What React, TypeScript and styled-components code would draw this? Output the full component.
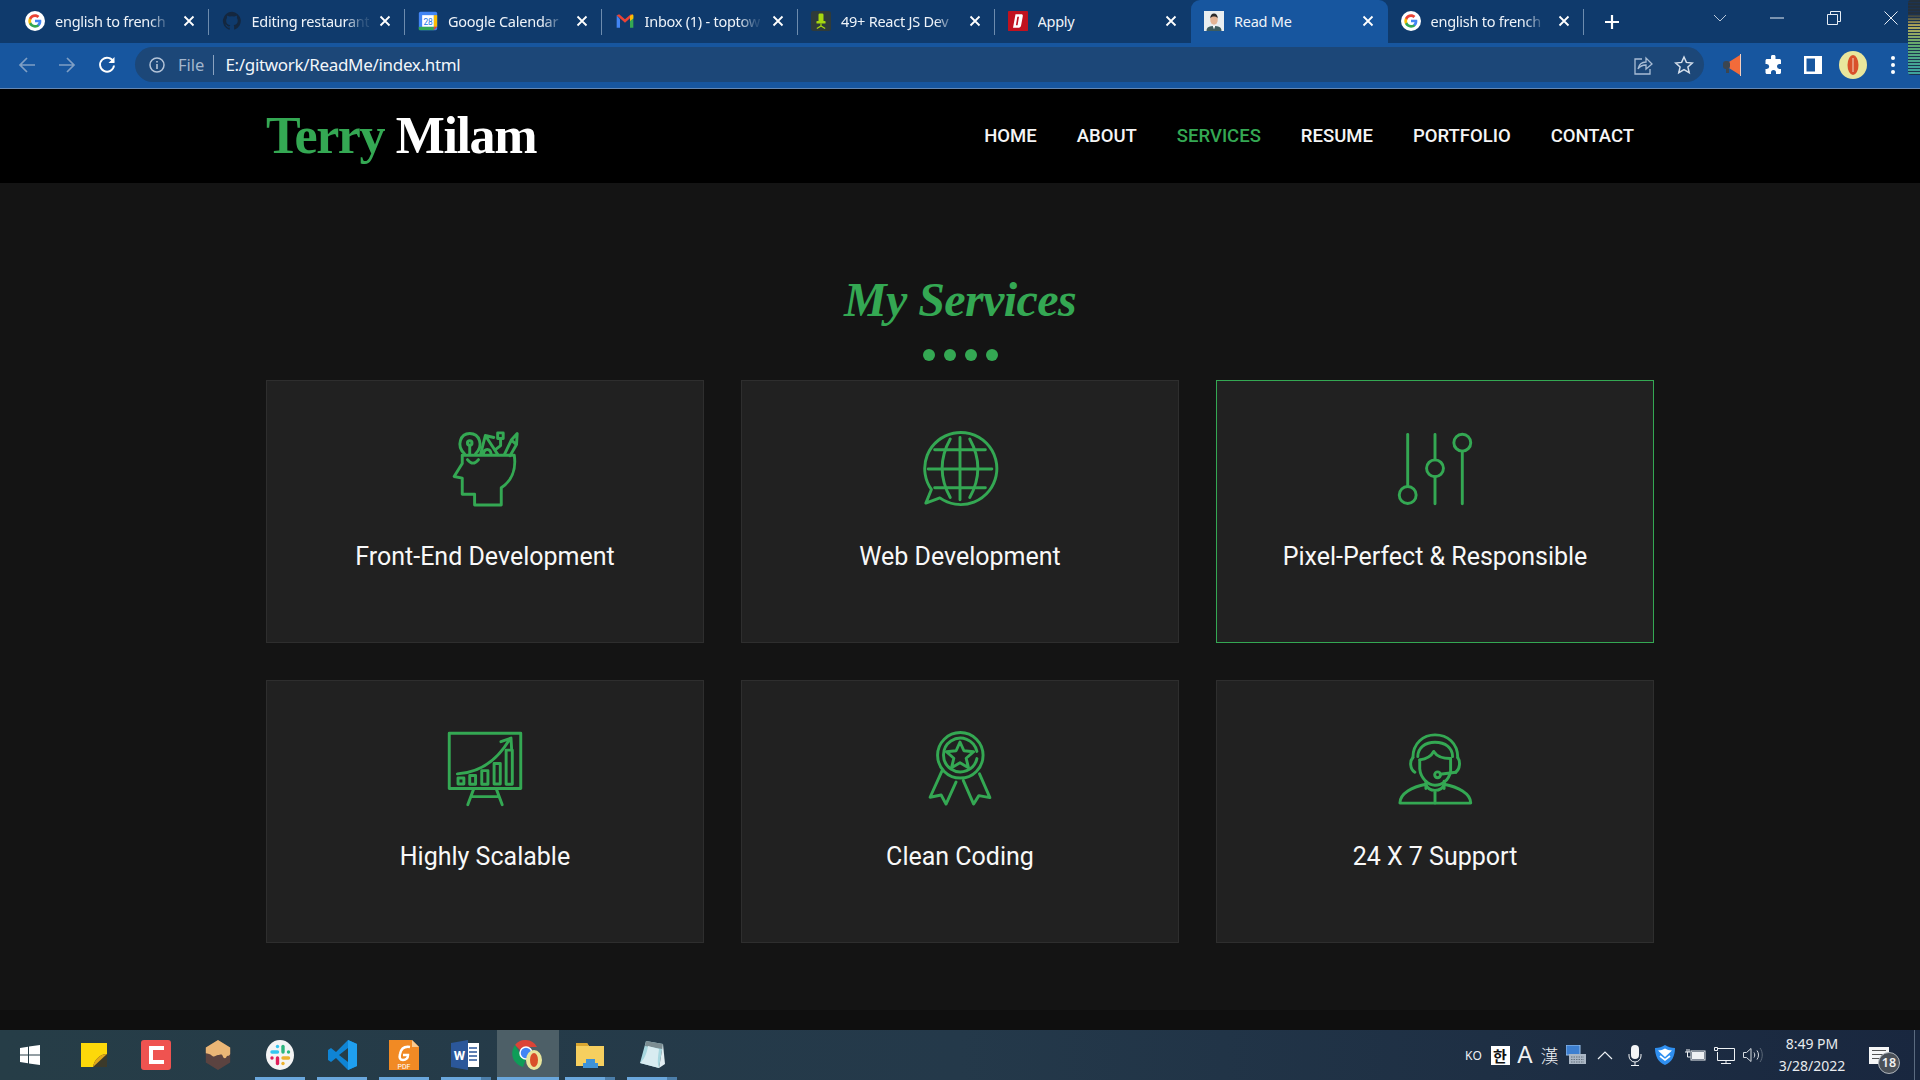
import React from "react";
import styled, { createGlobalStyle } from "styled-components";

const GREEN = "#34a853";

const Global = createGlobalStyle`
  html, body { margin: 0; padding: 0; background: #141414; }
  * { box-sizing: border-box; }
`;

const Screen = styled.div`
  position: relative;
  width: 1920px;
  height: 1080px;
  overflow: hidden;
  display: flex;
  flex-direction: column;
  background: #141414;
  font-family: "Noto Sans", sans-serif;
`;

/* ---------- browser chrome ---------- */
const TabStrip = styled.div`
  height: 43px;
  flex: none;
  display: flex;
  align-items: stretch;
  padding-left: 12px;
  background: #0f3a6c;
`;
const Tab = styled.div<{ $active?: boolean; $sep?: boolean }>`
  position: relative;
  width: 196.5px;
  flex: none;
  display: flex;
  align-items: center;
  padding: 0 13px 2px 13px;
  gap: 10px;
  color: #eef3f9;
  font-size: 14.5px;
  letter-spacing: -0.25px;
  background: ${(p) => (p.$active ? "#17569f" : "transparent")};
  border-radius: ${(p) => (p.$active ? "9px 9px 0 0" : "0")};
  &::after {
    content: "";
    display: ${(p) => (p.$sep ? "block" : "none")};
    position: absolute;
    right: 0;
    top: 9px;
    height: 26px;
    width: 1px;
    background: #6d8cae;
  }
`;
const Fav = styled.svg`
  width: 20px;
  height: 20px;
  flex: none;
`;
const TabTitle = styled.span<{ $fade?: boolean }>`
  flex: 1;
  min-width: 0;
  white-space: nowrap;
  overflow: hidden;
  ${(p) =>
    p.$fade
      ? "mask-image: linear-gradient(90deg, #000 80%, rgba(0,0,0,0.15) 95%);"
      : ""}
`;
const CloseX = styled.svg`
  width: 12px;
  height: 12px;
  flex: none;
  margin-right: 1px;
`;
const NewTab = styled.div`
  width: 56px;
  flex: none;
  display: flex;
  align-items: center;
  justify-content: center;
`;
const WinControls = styled.div`
  margin-left: auto;
  display: flex;
  align-items: flex-start;
  padding-right: 1px;
`;
const WinBtn = styled.div`
  width: 57px;
  height: 36px;
  display: flex;
  align-items: center;
  justify-content: center;
`;
const ToolBar = styled.div`
  height: 46px;
  flex: none;
  display: flex;
  align-items: center;
  padding: 0 8px 2px 7px;
  background: #17569f;
  border-bottom: 1px solid #6487b3;
`;
const ToolBtn = styled.div<{ $w?: number }>`
  width: ${(p) => p.$w ?? 40}px;
  height: 35px;
  flex: none;
  display: flex;
  align-items: center;
  justify-content: center;
`;
const Omnibox = styled.div`
  width: 1569px;
  height: 35px;
  margin: 0 9px 0 8px;
  flex: none;
  display: flex;
  align-items: center;
  padding: 0 0 0 13px;
  border-radius: 18px;
  background: #1c4778;
`;
const SchemeLabel = styled.span`
  margin-left: 12px;
  font-size: 16.5px;
  color: #a3b6cd;
`;
const UrlDivider = styled.span`
  width: 1px;
  height: 20px;
  margin: 0 11px 0 9px;
  background: #8ba3c0;
`;
const UrlText = styled.span`
  font-size: 17px;
  letter-spacing: -0.32px;
  color: #f2f6fa;
`;
const OmniActions = styled.div`
  margin-left: auto;
  display: flex;
`;
const Meter = styled.div`
  position: absolute;
  top: 0;
  right: 0;
  width: 12px;
  height: 75px;
  border-radius: 3px 0 0 3px;
  background: repeating-linear-gradient(
      180deg,
      transparent 0 2px,
      #1d3350 2px 3px
    ),
    linear-gradient(180deg, #24303c 0 18%, #b5a95a 35%, #5fa86f 60%, #3fa39b 90%);
`;

/* ---------- page ---------- */
const SiteHeader = styled.header`
  height: 94px;
  flex: none;
  background: #000;
`;
const HeaderInner = styled.div`
  width: 1388px;
  height: 100%;
  margin: 0 auto;
  display: flex;
  align-items: center;
  justify-content: space-between;
`;
const Logo = styled.div`
  font-family: "Liberation Serif", serif;
  font-weight: 700;
  font-size: 52px;
  letter-spacing: -1.4px;
  color: #fff;
  line-height: 1;
`;
const LogoAccent = styled.span`
  color: ${GREEN};
`;
const Nav = styled.nav`
  display: flex;
`;
const NavLink = styled.a<{ $active?: boolean }>`
  padding: 0 20px;
  font-family: Roboto, sans-serif;
  font-weight: 500;
  font-size: 18.5px;
  color: ${(p) => (p.$active ? GREEN : "#f5f5f5")};
`;
const Main = styled.main`
  flex: 1;
  padding-top: 87px;
  display: flex;
  flex-direction: column;
  align-items: center;
`;
const Title = styled.h2`
  margin: 0;
  height: 60px;
  line-height: 60px;
  font-family: "Liberation Serif", serif;
  font-style: italic;
  font-weight: 700;
  font-size: 48px;
  letter-spacing: -0.6px;
  color: ${GREEN};
`;
const Dots = styled.div`
  display: flex;
  gap: 9px;
  margin: 19px 0;
`;
const Dot = styled.span`
  width: 12px;
  height: 12px;
  border-radius: 50%;
  background: ${GREEN};
`;
const Grid = styled.div`
  display: grid;
  grid-template-columns: repeat(3, 438px);
  grid-auto-rows: 263px;
  column-gap: 37px;
  row-gap: 37px;
`;
const Card = styled.article<{ $hl?: boolean }>`
  display: flex;
  flex-direction: column;
  align-items: center;
  padding-top: 48px;
  background: #212121;
  border: 1px solid ${(p) => (p.$hl ? GREEN : "#2e2e2e")};
`;
const CardIcon = styled.svg`
  width: 78px;
  height: 78px;
  flex: none;
  fill: none;
  stroke: ${GREEN};
  stroke-width: 9;
  stroke-linecap: round;
  stroke-linejoin: round;
`;
const CardTitle = styled.h3`
  margin: 35px 0 0;
  line-height: 30px;
  font-family: Roboto, sans-serif;
  font-weight: 400;
  font-size: 25px;
  color: #f8f8f8;
`;
const PageFoot = styled.div`
  height: 20px;
  flex: none;
  background: #0f0f0f;
`;

/* ---------- taskbar ---------- */
const Taskbar = styled.footer`
  height: 50px;
  flex: none;
  display: flex;
  align-items: stretch;
  background: linear-gradient(90deg, #263d47 0%, #24394a 50%, #19273f 100%);
`;
const StartBtn = styled.div`
  width: 63px;
  flex: none;
  display: flex;
  align-items: center;
  justify-content: center;
  padding-right: 3px;
`;
const Slot = styled.div<{ $run?: boolean; $active?: boolean; $multi?: boolean }>`
  position: relative;
  width: 62px;
  flex: none;
  display: flex;
  align-items: center;
  justify-content: center;
  background: ${(p) => (p.$active ? "#4d5f67" : "transparent")};
  &::after {
    content: "";
    display: ${(p) => (p.$run ? "block" : "none")};
    position: absolute;
    bottom: 0;
    left: ${(p) => (p.$active ? "0" : "6px")};
    right: ${(p) => (p.$active ? "0" : "6px")};
    height: 3px;
    background: ${(p) =>
      p.$multi
        ? "linear-gradient(90deg, #6aa7dc 0 40px, #4c7ea9 40px)"
        : "#6aa7dc"};
  }
`;
const Tray = styled.div`
  margin-left: auto;
  display: flex;
  align-items: stretch;
  color: #eef1f4;
`;
const TraySlot = styled.div<{ $w: number }>`
  width: ${(p) => p.$w}px;
  flex: none;
  display: flex;
  align-items: center;
  justify-content: center;
`;
const Ko = styled.span`
  font-size: 12px;
  letter-spacing: 0.3px;
`;
const Hangul = styled.span`
  width: 19px;
  height: 19px;
  display: flex;
  align-items: center;
  justify-content: center;
  background: #fff;
  color: #111;
  font-family: "Noto Sans CJK KR", sans-serif;
  font-weight: 700;
  font-size: 15px;
`;
const BigA = styled.span`
  font-family: "Liberation Sans", sans-serif;
  font-size: 23px;
`;
const Han = styled.span`
  font-family: "Noto Sans CJK TC", sans-serif;
  font-size: 18px;
  font-weight: 300;
`;
const Clock = styled.div`
  display: flex;
  flex-direction: column;
  align-items: center;
  font-size: 14px;
  line-height: 22px;
  color: #e8ebee;
`;
const Notif = styled.div`
  position: relative;
  width: 20px;
  height: 17px;
  background: #f5f6f7;
`;
const NotifLine = styled.span`
  display: block;
  height: 1px;
  margin: 3px 3px 0;
  background: #555;
`;
const NotifBadge = styled.span`
  position: absolute;
  right: -11px;
  bottom: -10px;
  width: 22px;
  height: 22px;
  border-radius: 50%;
  display: flex;
  align-items: center;
  justify-content: center;
  background: #4a5058;
  border: 1px solid #aeb4ba;
  font-size: 12.5px;
  font-weight: 600;
  color: #f2f2f2;
`;
const TrayEdge = styled.span`
  width: 1px;
  margin: 0 5px 0 13px;
  flex: none;
  background: #5b6b80;
`;

/* ---------- favicons ---------- */
const GoogleG = () => (
  <Fav viewBox="0 0 24 24">
    <circle cx="12" cy="12" r="12" fill="#fff" />
    <path d="M19.6 12.2c0-.6-.1-1.1-.2-1.6H12v3h4.3c-.2 1-.7 1.8-1.6 2.4v2h2.6c1.5-1.4 2.3-3.4 2.3-5.8z" fill="#4285F4" />
    <path d="M12 20c2.2 0 4-.7 5.3-1.9l-2.6-2c-.7.5-1.6.8-2.7.8-2.1 0-3.9-1.4-4.5-3.3H4.8v2.1C6.1 18.2 8.8 20 12 20z" fill="#34A853" />
    <path d="M7.5 13.6c-.3-1-.3-2.1 0-3.1V8.4H4.8c-1.1 2.2-1.1 5 0 7.3l2.7-2.1z" fill="#FBBC05" />
    <path d="M12 7.2c1.2 0 2.2.4 3 1.2l2.3-2.3C15.9 4.8 14.1 4 12 4 8.8 4 6.1 5.8 4.8 8.4l2.7 2.1c.6-1.9 2.4-3.3 4.5-3.3z" fill="#EA4335" />
  </Fav>
);
const GithubFav = () => (
  <Fav viewBox="0 0 24 24">
    <path fill="#14273f" d="M12 1a11 11 0 0 0-3.5 21.4c.6.1.8-.2.8-.5v-2c-3 .7-3.7-1.3-3.7-1.3-.5-1.3-1.2-1.6-1.2-1.6-1-.7 0-.7 0-.7 1.1.1 1.7 1.1 1.7 1.1 1 1.7 2.6 1.2 3.2.9.1-.7.4-1.2.7-1.5-2.4-.3-5-1.2-5-5.4 0-1.2.4-2.2 1.1-2.9-.1-.3-.5-1.4.1-2.9 0 0 .9-.3 3 1.1a10.500 10.500 0 0 1 5.500 0c2.100-1.400 3-1.100 3-1.100.6 1.500.2 2.600.1 2.900.7.7 1.100 1.700 1.100 2.900 0 4.200-2.600 5.100-5 5.400.4.3.7 1 .7 2v3c0 .3.2.6.8.5A11 11 0 0 0 12 1z" />
  </Fav>
);
const CalendarFav = () => (
  <Fav viewBox="0 0 24 24">
    <rect x="1" y="1" width="22" height="22" rx="2" fill="#4285F4" />
    <rect x="5" y="5" width="14" height="14" fill="#fff" />
    <rect x="1" y="19" width="18" height="4" fill="#34A853" />
    <rect x="19" y="5" width="4" height="14" fill="#FBBC05" />
    <path d="M19 19h4l-4 4z" fill="#EA4335" />
    <text x="12" y="16.500" textAnchor="middle" fontSize="10" fontFamily="Roboto, sans-serif" fill="#1a73e8">28</text>
  </Fav>
);
const GmailFav = () => (
  <Fav viewBox="0 0 24 24">
    <path d="M2 5v15h4V10z" fill="#4285F4" />
    <path d="M22 5v15h-4V10z" fill="#34A853" />
    <path d="M2 5l3-1 7 6 7-6 3 1-10 9z" fill="#EA4335" />
    <path d="M18 6l3-2 1 1v4l-4 3z" fill="#FBBC05" />
  </Fav>
);
const ChairFav = () => (
  <Fav viewBox="0 0 24 24">
    <rect x="0" y="0" width="24" height="24" rx="3" fill="#2f3b3a" />
    <rect x="9" y="3" width="6" height="11" rx="1.500" fill="#a6d80f" />
    <rect x="6.500" y="12" width="11" height="3" rx="1" fill="#a6d80f" />
    <path d="M12 15v4M7 21l5-3 5 3" stroke="#a6d80f" strokeWidth="1.500" fill="none" />
  </Fav>
);
const DFav = () => (
  <Fav viewBox="0 0 24 24">
    <rect width="24" height="24" fill="#c1121f" rx="1" />
    <path d="M9 4h7c1.500 0 2 1 1.700 2.500l-2 11C15.400 19 14.500 20 13 20H6z M11.200 7L9.500 17h2l1.700-10z" fill="#fff" fillRule="evenodd" />
  </Fav>
);
const PersonFav = () => (
  <Fav viewBox="0 0 24 24">
    <rect width="24" height="24" fill="#e9eef0" />
    <path d="M3 24c0-5 4-6 9-6s9 1 9 6z" fill="#3e5c5e" />
    <ellipse cx="12" cy="10.500" rx="4.500" ry="6" fill="#e5b595" />
    <path d="M7.500 9c0-4 2-6 4.500-6s4.500 2 4.500 6c-1-2-2.500-2.500-4.500-2.500S8.500 7 7.500 9z" fill="#2b2b2b" />
    <path d="M10.500 18h3L12 22z" fill="#fff" />
  </Fav>
);
const X = () => (
  <CloseX viewBox="0 0 12 12">
    <path d="M1.500 1.500l9 9M10.500 1.500l-9 9" stroke="#fff" strokeWidth="1.800" />
  </CloseX>
);

const tabs = [
  { fav: <GoogleG />, title: "english to french", sep: true },
  { fav: <GithubFav />, title: "Editing restaurant", sep: true },
  { fav: <CalendarFav />, title: "Google Calendar", sep: true },
  { fav: <GmailFav />, title: "Inbox (1) - toptow", sep: true },
  { fav: <ChairFav />, title: "49+ React JS Dev", sep: true },
  { fav: <DFav />, title: "Apply", sep: false },
  { fav: <PersonFav />, title: "Read Me", sep: false, active: true },
  { fav: <GoogleG />, title: "english to french", sep: true },
];

const navItems = ["HOME", "ABOUT", "SERVICES", "RESUME", "PORTFOLIO", "CONTACT"];

/* ---------- service icons ---------- */
const HeadIcon = () => (
  <CardIcon viewBox="75 54 240 240">
    <path d="M125 135H285C292 180 275 215 245 235V288H163V255H125V205L100 200L125 160Z" />
    <path d="M141 148Q158 170 175 148" />
    <path d="M132 130C105 105 120 68 148 68C178 68 192 105 166 130" />
    <circle cx="148" cy="97" r="7" />
    <path d="M148 104V132" />
    <path d="M182 130L196 74L234 132M190 132C192 112 212 112 214 132M196 74L222 80" />
    <rect x="234" y="66" width="17" height="17" />
    <path d="M243 84V105L226 118" />
    <path d="M255 132L276 88L294 68L292 102L272 136M276 88L292 102" />
  </CardIcon>
);
const GlobeIcon = () => (
  <CardIcon viewBox="60 54 240 240">
    <path d="M118 266A111 111 0 1 0 92 240L75 282Z" />
    <path d="M180 80V272M82 177H278M102 118H258M102 235H258" />
    <path d="M150 85Q100 175 150 265M210 85Q260 175 210 265" />
  </CardIcon>
);
const SliderIcon = () => (
  <CardIcon viewBox="60 54 240 240">
    <path d="M96 71V231" />
    <circle cx="96" cy="257" r="26" />
    <path d="M180 71V149M180 201V284" />
    <circle cx="180" cy="175" r="26" />
    <circle cx="264" cy="96" r="26" />
    <path d="M264 122V284" />
  </CardIcon>
);
const ChartIcon = () => (
  <CardIcon viewBox="45 27 240 240" strokeLinecap="butt">
    <rect x="55" y="40" width="220" height="170" />
    <path d="M130 212L112 260M200 212L218 260M122 235H208" />
    <rect x="82" y="178" width="18" height="18" />
    <rect x="118" y="170" width="18" height="27" />
    <rect x="155" y="155" width="19" height="42" />
    <rect x="193" y="133" width="19" height="63" />
    <rect x="230" y="92" width="19" height="105" />
    <path d="M80 165Q180 160 240 60M214 66L245 55L247 90" />
  </CardIcon>
);
const BadgeIcon = () => (
  <CardIcon viewBox="60 27 240 240">
    <circle cx="181" cy="108" r="70" />
    <path d="M232 118A52 52 0 1 1 232 96" />
    <path d="M180 67L192 94L222 97L199 117L206 146L180 131L154 146L161 117L138 97L168 94Z" />
    <path d="M125 155L88 237L122 230L137 258L168 190" />
    <path d="M240 165L272 238L238 232L222 258L190 185" />
  </CardIcon>
);
const SupportIcon = () => (
  <CardIcon viewBox="60 27 240 240">
    <path d="M112 115C112 70 145 45 180 45C218 45 250 70 250 115" />
    <path d="M127 112C127 85 150 68 180 68C212 68 234 85 234 112" />
    <path d="M133 122Q165 118 176 96Q190 118 228 118" />
    <path d="M133 122V150C136 180 160 200 180 200C202 200 222 185 228 158V118" />
    <path d="M112 115C102 125 102 150 118 160M250 115C258 125 258 150 244 160" />
    <path d="M244 160L196 166" />
    <circle cx="188" cy="168" r="9" />
    <path d="M152 188V210M208 188V210" />
    <path d="M72 255C72 225 110 205 152 197C160 222 200 222 208 197C250 205 290 225 290 255Z" />
    <path d="M180 222V255" />
  </CardIcon>
);

const services = [
  { icon: <HeadIcon />, title: "Front-End Development" },
  { icon: <GlobeIcon />, title: "Web Development" },
  { icon: <SliderIcon />, title: "Pixel-Perfect & Responsible", hl: true },
  { icon: <ChartIcon />, title: "Highly Scalable" },
  { icon: <BadgeIcon />, title: "Clean Coding" },
  { icon: <SupportIcon />, title: "24 X 7 Support" },
];

/* ---------- taskbar icons ---------- */
const Ico = styled.svg<{ $s?: number }>`
  width: ${(p) => p.$s ?? 30}px;
  height: ${(p) => p.$s ?? 30}px;
  flex: none;
`;
const taskIcons = [
  {
    run: false,
    node: (
      <Ico viewBox="0 0 30 30">
        <path d="M2 3h26v24H2z" fill="#fdd80a" />
        <path d="M28 14v13H14c1-7 7-13 14-13z" fill="#3c3a2a" />
        <path d="M28 14c-7 0-13 6-14 13l14-13z" fill="#e0a81b" />
      </Ico>
    ),
  },
  {
    run: false,
    node: (
      <Ico viewBox="0 0 30 30">
        <rect width="30" height="30" rx="3" fill="#ef5350" />
        <path d="M23 8H10v14h13" fill="none" stroke="#fff" strokeWidth="4" />
      </Ico>
    ),
  },
  {
    run: false,
    node: (
      <Ico viewBox="0 0 30 32">
        <path d="M15 0l13 8v16l-13 8-13-8V8z" fill="#5b4340" />
        <path d="M15 0l13 8v7c-1 3-3 1-4 3s-3 2-4-1-3-1-5-1-4 3-6 1-3-2-7-3V8z" fill="#eab676" />
      </Ico>
    ),
  },
  {
    run: true,
    node: (
      <Ico viewBox="0 0 30 30">
        <ellipse cx="15" cy="15" rx="14" ry="15" fill="#f4f4f4" />
        <path d="M7 12h5.500" stroke="#36c5f0" strokeWidth="3.400" strokeLinecap="round" />
        <circle cx="12.500" cy="6.500" r="1.700" fill="#36c5f0" />
        <path d="M18 6.500V12" stroke="#2eb67d" strokeWidth="3.400" strokeLinecap="round" />
        <circle cx="23.500" cy="12" r="1.700" fill="#2eb67d" />
        <path d="M18 18h5.500" stroke="#ecb22e" strokeWidth="3.400" strokeLinecap="round" />
        <circle cx="18" cy="23.500" r="1.700" fill="#ecb22e" />
        <path d="M12.500 18v5.500" stroke="#e01e5a" strokeWidth="3.400" strokeLinecap="round" />
        <circle cx="7" cy="18" r="1.700" fill="#e01e5a" />
      </Ico>
    ),
  },
  {
    run: true,
    node: (
      <Ico viewBox="0 0 30 30">
        <path d="M21 0l9 4v22l-9 4-12-12-5 4-3-2V10l3-2 5 4z" fill="#0f84d4" />
        <path d="M21 8L12 15l9 7z" fill="#263d47" />
        <path d="M21 0l9 4v22l-9 4z" fill="#1f9ff0" />
      </Ico>
    ),
  },
  {
    run: true,
    node: (
      <Ico viewBox="0 0 30 30">
        <path d="M0 0h23l7 7v23H0z" fill="#f18a24" />
        <path d="M23 0l7 7h-7z" fill="#f8c98f" />
        <path d="M21 7c-6-1-9 2-10 7-1 4 0 6 3 6s5-2 5-5h-5" fill="none" stroke="#fff" strokeWidth="2.500" />
        <text x="15" y="28.500" textAnchor="middle" fontSize="7" fontFamily="Roboto, sans-serif" fill="#fff">PDF</text>
      </Ico>
    ),
  },
  {
    run: true,
    multi: true,
    node: (
      <Ico viewBox="0 0 30 30">
        <path d="M12 3h16v24H12z" fill="#fff" />
        <path d="M18 8h8M18 12h8M18 16h8M18 20h8" stroke="#2b579a" strokeWidth="1.500" />
        <path d="M0 3l17-3v30L0 27z" fill="#2b579a" />
        <text x="8.500" y="20" textAnchor="middle" fontSize="13" fontWeight="700" fontFamily="Roboto, sans-serif" fill="#fff">W</text>
      </Ico>
    ),
  },
  {
    run: true,
    active: true,
    node: (
      <Ico viewBox="0 0 32 32" $s={32}>
        <path d="M14 1A13 13 0 0 1 25 8H14a7 7 0 0 0-6 3L3 6a13 13 0 0 1 11-5z" fill="#db4437" />
        <path d="M3 6l6 10a6 6 0 0 0 5 4l-3 8A14 14 0 0 1 3 6z" fill="#0f9d58" />
        <circle cx="14" cy="14" r="6" fill="#4285f4" stroke="#fff" strokeWidth="1.500" />
        <ellipse cx="22" cy="21" rx="8" ry="10" fill="#e9e69c" />
        <ellipse cx="22" cy="21" rx="4" ry="7" fill="#d9502a" />
      </Ico>
    ),
  },
  {
    run: true,
    multi: true,
    node: (
      <Ico viewBox="0 0 30 30">
        <path d="M1 3h11l2 3h15v20H1z" fill="#f6cf5f" />
        <path d="M1 3h11l2 3H1z" fill="#d9a631" />
        <path d="M11 19h9v4h3v5H8v-5h3z" fill="#3f93d8" />
      </Ico>
    ),
  },
  {
    run: true,
    multi: true,
    node: (
      <Ico viewBox="0 0 30 30">
        <path d="M9 1l17 3-4 24L3 23z" fill="#a7d7df" />
        <path d="M9 1l17 3-1 5L8 6z" fill="#7c8d92" />
        <path d="M22 28l4-24 2 20z" fill="#e2eef2" />
        <path d="M3 23c4-3 7-10 8-17l11 3c-1 8-2 14 0 19z" fill="#d8ecf1" />
      </Ico>
    ),
  },
];

export default function App() {
  return (
    <Screen>
      <Global />
      <TabStrip>
        {tabs.map((t, i) => (
          <Tab key={i} $active={t.active} $sep={t.sep}>
            {t.fav}
            <TabTitle $fade={t.title.length > 8}>{t.title}</TabTitle>
            <X />
          </Tab>
        ))}
        <NewTab>
          <svg width="16" height="16" viewBox="0 0 16 16">
            <path d="M8 1v14M1 8h14" stroke="#fff" strokeWidth="2.200" />
          </svg>
        </NewTab>
        <WinControls>
          <WinBtn>
            <svg width="14" height="8" viewBox="0 0 14 8">
              <path d="M1 1l6 6 6-6" fill="none" stroke="#b9c8da" strokeWidth="1" />
            </svg>
          </WinBtn>
          <WinBtn>
            <svg width="14" height="2" viewBox="0 0 14 2">
              <path d="M0 1h14" stroke="#e6edf5" strokeWidth="1" />
            </svg>
          </WinBtn>
          <WinBtn>
            <svg width="14" height="14" viewBox="0 0 14 14">
              <path d="M.5 3.500h10v10H.5zM3.500 3.500V.5h10v10h-3" fill="none" stroke="#e6edf5" strokeWidth="1" />
            </svg>
          </WinBtn>
          <WinBtn>
            <svg width="14" height="14" viewBox="0 0 14 14">
              <path d="M.5.5l13 13M13.500.5l-13 13" stroke="#e6edf5" strokeWidth="1" />
            </svg>
          </WinBtn>
        </WinControls>
      </TabStrip>
      <ToolBar>
        <ToolBtn>
          <svg width="18" height="18" viewBox="0 0 18 18">
            <path d="M17 9H2M9 2L2 9l7 7" fill="none" stroke="#7f9fc5" strokeWidth="1.700" />
          </svg>
        </ToolBtn>
        <ToolBtn>
          <svg width="18" height="18" viewBox="0 0 18 18">
            <path d="M1 9h15M9 2l7 7-7 7" fill="none" stroke="#7f9fc5" strokeWidth="1.700" />
          </svg>
        </ToolBtn>
        <ToolBtn>
          <svg width="18" height="18" viewBox="0 0 18 18">
            <path d="M15.500 6A7 7 0 1 0 16 9.500" fill="none" stroke="#fff" strokeWidth="1.900" />
            <path d="M16.500 1v6h-6z" fill="#fff" />
          </svg>
        </ToolBtn>
        <Omnibox>
          <svg width="18" height="18" viewBox="0 0 18 18">
            <circle cx="9" cy="9" r="7" fill="none" stroke="#b4c4d8" strokeWidth="1.500" />
            <path d="M9 8v5M9 5v1.600" stroke="#b4c4d8" strokeWidth="1.600" />
          </svg>
          <SchemeLabel>File</SchemeLabel>
          <UrlDivider />
          <UrlText>E:/gitwork/ReadMe/index.html</UrlText>
          <OmniActions>
            <ToolBtn $w={41}>
              <svg width="20" height="20" viewBox="0 0 20 20">
                <path d="M9 4H2v15h15v-5" fill="none" stroke="#a9bdd5" strokeWidth="1.300" />
                <path d="M5 14c1-5 4-7 8-7V3l6 6-6 5v-4c-3 0-6 1-8 4z" fill="none" stroke="#a9bdd5" strokeWidth="1.300" />
              </svg>
            </ToolBtn>
            <ToolBtn $w={41}>
              <svg width="20" height="20" viewBox="0 0 20 20">
                <path d="M10 2l2.400 5.400 5.900.6-4.400 3.900 1.300 5.800L10 14.700l-5.200 3 1.300-5.800L1.700 8l5.900-.6z" fill="none" stroke="#d5dfeb" strokeWidth="1.500" />
              </svg>
            </ToolBtn>
          </OmniActions>
        </Omnibox>
        <ToolBtn>
          <svg width="20" height="22" viewBox="0 0 20 22">
            <path d="M6 8l11-7v20L6 14z" fill="#f26b3a" />
            <path d="M17.500 0v22" stroke="#f5d0c0" strokeWidth="1" />
            <rect x="0" y="7" width="7" height="8" rx="3" fill="#3c4650" />
            <path d="M3 15h3v4H3z" fill="#3c4650" />
          </svg>
        </ToolBtn>
        <ToolBtn>
          <svg width="19" height="19" viewBox="0 0 19 19">
            <path d="M7 1.500a2.300 2.300 0 0 1 4.500 0V4h4c.8 0 1.500.7 1.500 1.500V9h-1.500a2.500 2.500 0 0 0 0 5H17v3.500c0 .8-.7 1.500-1.500 1.500H12v-1.500a2.500 2.500 0 0 0-5 0V19H3c-.8 0-1.500-.7-1.500-1.500V14h1.200a2.500 2.500 0 0 0 0-5H1.500V5.500C1.500 4.700 2.200 4 3 4h4z" fill="#fff" />
          </svg>
        </ToolBtn>
        <ToolBtn>
          <svg width="18" height="18" viewBox="0 0 18 18">
            <path fillRule="evenodd" d="M0 0h18v18H0zM2.500 2.500v13H11v-13z" fill="#fff" />
          </svg>
        </ToolBtn>
        <ToolBtn>
          <svg width="28" height="28" viewBox="0 0 28 28">
            <ellipse cx="14" cy="14" rx="14" ry="14" fill="#e9e69c" />
            <ellipse cx="14" cy="14" rx="5.500" ry="10" fill="#d9502a" />
            <path d="M14 7v14" stroke="#f4d5c0" strokeWidth="1" />
          </svg>
        </ToolBtn>
        <ToolBtn>
          <svg width="6" height="20" viewBox="0 0 6 20">
            <circle cx="3" cy="3" r="2" fill="#fff" />
            <circle cx="3" cy="10" r="2" fill="#fff" />
            <circle cx="3" cy="17" r="2" fill="#fff" />
          </svg>
        </ToolBtn>
      </ToolBar>
      <Meter />
      <SiteHeader>
        <HeaderInner>
          <Logo>
            <LogoAccent>Terry</LogoAccent> Milam
          </Logo>
          <Nav>
            {navItems.map((n) => (
              <NavLink key={n} $active={n === "SERVICES"}>
                {n}
              </NavLink>
            ))}
          </Nav>
        </HeaderInner>
      </SiteHeader>
      <Main>
        <Title>My Services</Title>
        <Dots>
          <Dot />
          <Dot />
          <Dot />
          <Dot />
        </Dots>
        <Grid>
          {services.map((s) => (
            <Card key={s.title} $hl={s.hl}>
              {s.icon}
              <CardTitle>{s.title}</CardTitle>
            </Card>
          ))}
        </Grid>
      </Main>
      <PageFoot />
      <Taskbar>
        <StartBtn>
          <svg width="20" height="20" viewBox="0 0 20 20">
            <path d="M0 3l8-1.200V9.500H0zM9 1.600L20 0v9.500H9zM0 10.500h8v7.700L0 17zM9 10.500h11V20L9 18.400z" fill="#fff" />
          </svg>
        </StartBtn>
        {taskIcons.map((t, i) => (
          <Slot key={i} $run={t.run} $active={t.active} $multi={t.multi}>
            {t.node}
          </Slot>
        ))}
        <Tray>
          <TraySlot $w={27}>
            <Ko>KO</Ko>
          </TraySlot>
          <TraySlot $w={26}>
            <Hangul>한</Hangul>
          </TraySlot>
          <TraySlot $w={24}>
            <BigA>A</BigA>
          </TraySlot>
          <TraySlot $w={25}>
            <Han>漢</Han>
          </TraySlot>
          <TraySlot $w={27}>
            <svg width="20" height="20" viewBox="0 0 20 20">
              <rect x="0" y="0" width="14" height="10" fill="#3d7fd0" stroke="#9cc3ec" />
              <rect x="3" y="9" width="17" height="10" fill="#aab6c4" />
              <path d="M5 12h13M5 14.500h13M5 17h13" stroke="#66727f" strokeWidth="1" strokeDasharray="1.500 1" />
            </svg>
          </TraySlot>
          <TraySlot $w={31}>
            <svg width="16" height="9" viewBox="0 0 16 9">
              <path d="M1 8l7-7 7 7" fill="none" stroke="#eef1f4" strokeWidth="1.200" />
            </svg>
          </TraySlot>
          <TraySlot $w={29}>
            <svg width="14" height="21" viewBox="0 0 14 21">
              <rect x="3" y="0" width="8" height="14" rx="4" fill="#f2f4f6" />
              <path d="M1 9v2a6 6 0 0 0 12 0V9M7 17v3M3 20.500h8" fill="none" stroke="#f2f4f6" strokeWidth="1" />
            </svg>
          </TraySlot>
          <TraySlot $w={31}>
            <svg width="20" height="20" viewBox="0 0 20 20">
              <path d="M10 0c3 2 6 3 10 3 0 8-3 14-10 17C3 17 0 11 0 3c4 0 7-1 10-3z" fill="#2f8ff0" />
              <path d="M3 5.500c3 0 5-1 7-2 2 1 4 2 7 2L10 12z" fill="#fff" />
              <path d="M5 11l5 4 5-4" fill="none" stroke="#fff" strokeWidth="1.700" />
            </svg>
          </TraySlot>
          <TraySlot $w={30}>
            <svg width="21" height="14" viewBox="0 0 21 14">
              <rect x="6" y="3" width="14" height="9" fill="none" stroke="#eef1f4" strokeWidth="1" />
              <rect x="7" y="4" width="12" height="7" fill="#eef1f4" />
              <path d="M0 4h5M2 1v3M4 1v3M2.500 4v5h3" fill="none" stroke="#eef1f4" strokeWidth="1" />
            </svg>
          </TraySlot>
          <TraySlot $w={29}>
            <svg width="21" height="17" viewBox="0 0 21 17">
              <path d="M.5 3.500v-3h3v3zM4 1.500h16.500v12h-17V5M12 14v2.500M7 16.500h10" fill="none" stroke="#eef1f4" strokeWidth="1" />
            </svg>
          </TraySlot>
          <TraySlot $w={28}>
            <svg width="20" height="16" viewBox="0 0 20 16">
              <path d="M.5 5.500h3L8 1.500v13l-4.500-4h-3zM11 5.500c1 1.500 1 3.500 0 5M14 3.500c2 2.500 2 6.500 0 9" fill="none" stroke="#d6dbe0" strokeWidth="1" />
              <path d="M17 1c3 4 3 10 0 14" fill="none" stroke="#5b6878" strokeWidth="1" />
            </svg>
          </TraySlot>
          <TraySlot $w={90}>
            <Clock>
              <span>8:49 PM</span>
              <span>3/28/2022</span>
            </Clock>
          </TraySlot>
          <TraySlot $w={44}>
            <Notif>
              <NotifLine />
              <NotifLine />
              <NotifLine />
              <NotifBadge>18</NotifBadge>
            </Notif>
          </TraySlot>
          <TrayEdge />
        </Tray>
      </Taskbar>
    </Screen>
  );
}
